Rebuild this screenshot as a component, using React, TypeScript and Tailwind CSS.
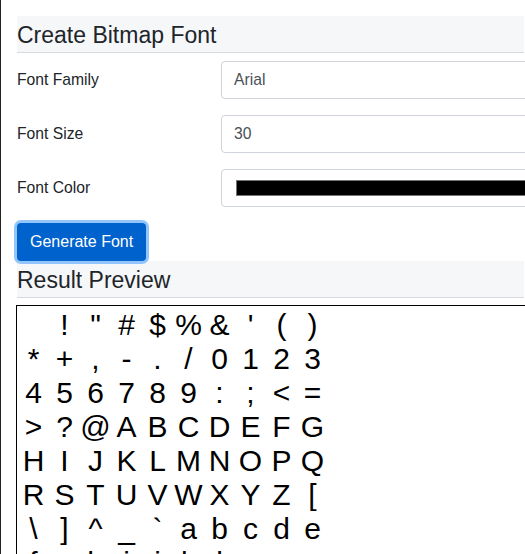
import React from "react";

const chars: string[] = [];
for (let c = 32; c < 127; c++) chars.push(String.fromCharCode(c));
const rows: string[][] = [];
for (let i = 0; i < chars.length; i += 10) rows.push(chars.slice(i, i + 10));

function Header({ title }: { title: string }) {
  return (
    <div className="w-[507px] bg-[#f6f7f9] border-b border-[#d6dadf] pt-[6px] pb-[3px] text-[23px] leading-[27px] text-[#212529]">
      {title}
    </div>
  );
}

function Row({ label, children }: { label: string; children: React.ReactNode }) {
  return (
    <div className="flex items-center h-[38px] mb-4">
      <div className="w-[204px] shrink-0 text-[15.7px] text-[#212529]">{label}</div>
      <div className="w-[330px] shrink-0 h-[38px] border border-[#ced4da] rounded-[4px] bg-white flex items-center">
        {children}
      </div>
    </div>
  );
}

export default function App() {
  return (
    <div
      className="w-[525px] h-[554px] overflow-hidden bg-white border-l border-[#222]"
      style={{ fontFamily: '"Liberation Sans", Arial, sans-serif' }}
    >
      <div className="pl-4 pt-4">
        <Header title="Create Bitmap Font" />
        <div className="mt-2">
          <Row label="Font Family">
            <span className="pl-3 text-[15.7px] text-[#495057]">Arial</span>
          </Row>
          <Row label="Font Size">
            <span className="pl-3 text-[15.7px] text-[#495057]">30</span>
          </Row>
          <Row label="Font Color">
            <div className="ml-[14px] w-[310px] h-[16px] bg-black border border-[#777]" />
          </Row>
        </div>
        <button className="h-[38px] px-[13px] rounded-[4px] bg-[#0062cc] text-white text-[16px] shadow-[0_0_0_3px_#93c5fd]">
          Generate Font
        </button>
        <Header title="Result Preview" />
        <div className="mt-[7px] -ml-px w-[520px] h-[260px] border border-black pl-px pt-[2px] bg-white">
          {rows.map((r, i) => (
            <div key={i} className="flex h-[34px] leading-[34px] text-[30px] text-black">
              {r.map((ch, j) => (
                <span key={j} className="w-[31px] shrink-0 text-center whitespace-pre">
                  {ch}
                </span>
              ))}
            </div>
          ))}
        </div>
      </div>
    </div>
  );
}
